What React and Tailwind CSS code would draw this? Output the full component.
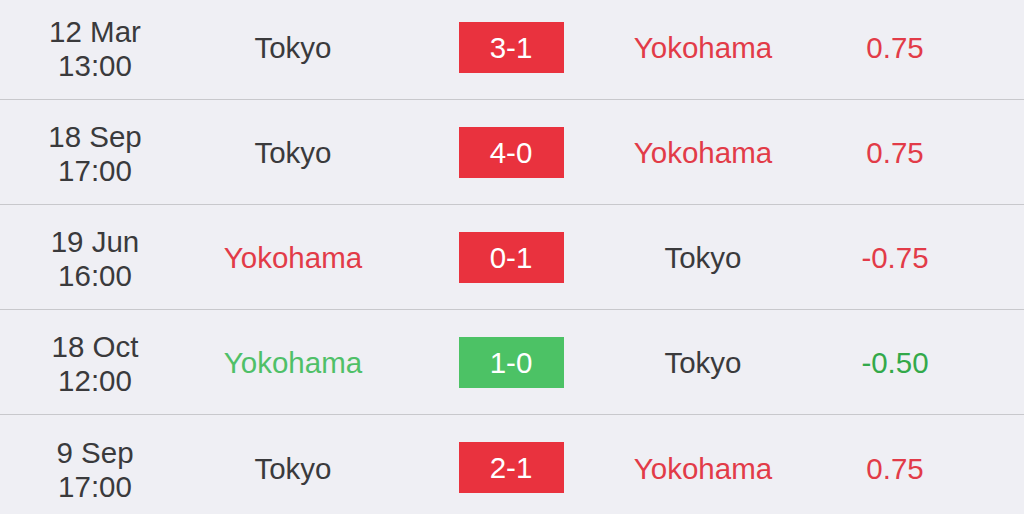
import React from "react";

const rows = [
  { d: "12 Mar", t: "13:00", home: "Tokyo", hc: "text-[#3a3a3c]", score: "3-1", sc: "bg-[#e9323e]", away: "Yokohama", ac: "text-[#e23b48]", odds: "0.75", oc: "text-[#e23b48]" },
  { d: "18 Sep", t: "17:00", home: "Tokyo", hc: "text-[#3a3a3c]", score: "4-0", sc: "bg-[#e9323e]", away: "Yokohama", ac: "text-[#e23b48]", odds: "0.75", oc: "text-[#e23b48]" },
  { d: "19 Jun", t: "16:00", home: "Yokohama", hc: "text-[#e23b48]", score: "0-1", sc: "bg-[#e9323e]", away: "Tokyo", ac: "text-[#3a3a3c]", odds: "-0.75", oc: "text-[#e23b48]" },
  { d: "18 Oct", t: "12:00", home: "Yokohama", hc: "text-[#4fc068]", score: "1-0", sc: "bg-[#4cc265]", away: "Tokyo", ac: "text-[#3a3a3c]", odds: "-0.50", oc: "text-[#33a94a]" },
  { d: "9 Sep", t: "17:00", home: "Tokyo", hc: "text-[#3a3a3c]", score: "2-1", sc: "bg-[#e9323e]", away: "Yokohama", ac: "text-[#e23b48]", odds: "0.75", oc: "text-[#e23b48]" },
];

export default function App() {
  return (
    <div className="w-[1024px] h-[514px] overflow-hidden bg-[#efeff4] text-[29.5px]" style={{ fontFamily: '"Liberation Sans", Arial, sans-serif' }}>
      <div className="-mt-[5px] flex flex-col">
        {rows.map((r, i) => (
          <div key={i} className={`grid grid-cols-[190px_206px_230px_154px_230px] items-center h-[105px] ${i < rows.length - 1 ? "border-b border-[#c8c8cc]" : ""}`}>
            <div className="flex flex-col items-center text-[#3a3a3c] leading-[34px] pt-[4px]">
              <span>{r.d}</span>
              <span>{r.t}</span>
            </div>
            <div className={`text-center pt-[3px] ${r.hc}`}>{r.home}</div>
            <div className="flex justify-center">
              <div className={`w-[105px] h-[51px] flex items-center justify-center text-white pt-[2px] ${r.sc}`}>{r.score}</div>
            </div>
            <div className={`text-center pt-[3px] ${r.ac}`}>{r.away}</div>
            <div className={`text-center pt-[3px] ${r.oc}`}>{r.odds}</div>
          </div>
        ))}
      </div>
    </div>
  );
}
